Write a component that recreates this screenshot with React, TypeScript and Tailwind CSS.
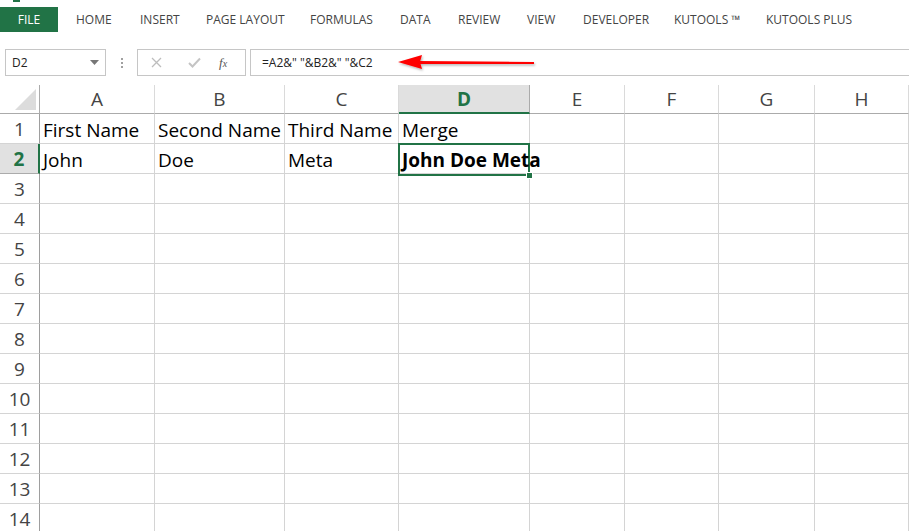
import React from "react";

const tabs = [
  { label: "HOME", w: "w-[64px]" },
  { label: "INSERT", w: "w-[66px]" },
  { label: "PAGE LAYOUT", w: "w-[104px]" },
  { label: "FORMULAS", w: "w-[90px]" },
  { label: "DATA", w: "w-[58px]" },
  { label: "REVIEW", w: "w-[69px]" },
  { label: "VIEW", w: "w-[56px]" },
  { label: "DEVELOPER", w: "w-[91px]" },
  { label: "KUTOOLS ™", w: "w-[92px]" },
  { label: "KUTOOLS PLUS", w: "w-[120px]" },
];

const columns = ["A", "B", "C", "D", "E", "F", "G", "H"];

const data: Record<number, string[]> = {
  1: ["First Name", "Second Name", "Third Name", "Merge"],
  2: ["John", "Doe", "Meta", ""],
};

const rows = Array.from({ length: 14 }, (_, i) => i + 1);

const font = { fontFamily: "'Open Sans', 'Liberation Sans', sans-serif" };

export default function App() {
  return (
    <div className="relative h-[531px] w-[909px] overflow-hidden bg-white text-[#222]" style={font}>
      {/* ribbon tabs */}
      <div className="h-[7px]">
        <div className="ml-[13px] h-[2px] w-[7px] bg-[#217346]" />
      </div>
      <div className="flex h-[25px] items-center text-[12px] text-[#444]">
        <div className="flex h-full w-[58px] items-center justify-center bg-[#217346] text-white">FILE</div>
        <div className="w-[18px]" />
        {tabs.map((t) => (
          <div key={t.label} className={`${t.w} whitespace-nowrap`}>
            {t.label}
          </div>
        ))}
      </div>

      {/* formula bar */}
      <div className="mt-[17px] flex h-[27px] items-stretch">
        <div className="ml-[5px] flex w-[101px] items-center justify-between border border-[#c6c6c6] pl-[6px] pr-[6px] text-[12px] text-[#222]">
          <span>D2</span>
          <svg width="9" height="5" viewBox="0 0 9 5">
            <path d="M0 0 L9 0 L4.5 5 Z" fill="#777" />
          </svg>
        </div>
        <div className="flex w-[31px] flex-col items-center justify-center gap-[2px]">
          <span className="h-[2px] w-[2px] bg-[#a0a0a0]" />
          <span className="h-[2px] w-[2px] bg-[#a0a0a0]" />
          <span className="h-[2px] w-[2px] bg-[#a0a0a0]" />
        </div>
        <div className="flex w-[109px] items-center border border-[#c6c6c6]">
          <svg className="ml-[13px]" width="11" height="11" viewBox="0 0 11 11">
            <path d="M1 1 L10 10 M10 1 L1 10" stroke="#bdbdbd" strokeWidth="1.3" />
          </svg>
          <svg className="ml-[26px]" width="13" height="11" viewBox="0 0 13 11">
            <path d="M1 6 L4.5 9.5 L12 1.5" stroke="#c4c4c4" strokeWidth="2" fill="none" />
          </svg>
          <span
            className="ml-[18px] text-[13px] italic text-[#555]"
            style={{ fontFamily: "'Liberation Serif', serif" }}
          >
            f<span className="text-[10px]">x</span>
          </span>
        </div>
        <div className="ml-[4px] flex flex-1 items-center border-y border-l border-[#c6c6c6] pl-[11px] text-[12px] text-[#222]">
          =A2&amp;" "&amp;B2&amp;" "&amp;C2
        </div>
      </div>

      {/* annotation arrow */}
      <svg className="absolute left-[396px] top-[53px]" width="144" height="20" viewBox="0 0 144 20">
        <defs>
          <filter id="sh" x="-10%" y="-50%" width="120%" height="200%">
            <feDropShadow dx="1" dy="1.5" stdDeviation="1.2" floodColor="#000" floodOpacity="0.3" />
          </filter>
        </defs>
        <g filter="url(#sh)">
          <path d="M2 9 L26 2 L24 9 L26 16 Z" fill="#ff0000" />
          <path d="M22 8 L138 9 L138 11 L22 11 Z" fill="#ff0000" />
        </g>
      </svg>

      {/* grid */}
      <div className="mt-[9px] grid grid-cols-[40px_115px_130px_114px_131px_95px_94px_96px_94px]">
        {/* header row */}
        <div className="relative h-[29px] border-b border-r border-[#ababab] bg-white">
          <svg className="absolute bottom-[3px] right-[3px]" width="21" height="21" viewBox="0 0 21 21">
            <path d="M21 0 L21 21 L0 21 Z" fill="#dcdcdc" />
          </svg>
        </div>
        {columns.map((c) =>
          c === "D" ? (
            <div
              key={c}
              className="flex h-[29px] items-center justify-center border-b-2 border-r border-b-[#217346] border-r-[#ababab] bg-[#e1e1e1] pt-[2px] text-[19px] font-bold text-[#217346]"
            >
              {c}
            </div>
          ) : (
            <div
              key={c}
              className="flex h-[29px] items-center justify-center border-b border-r border-b-[#ababab] border-r-[#dadada] bg-white text-[19px] text-[#444]"
            >
              {c}
            </div>
          )
        )}

        {rows.map((r) => (
          <React.Fragment key={r}>
            {r === 2 ? (
              <div className="flex h-[30px] items-center justify-center border-b border-r-2 border-b-[#ababab] border-r-[#217346] bg-[#e1e1e1] pt-[2px] text-[19px] font-bold text-[#217346]">
                {r}
              </div>
            ) : (
              <div className="flex h-[30px] items-center justify-center border-b border-r border-b-[#d4d4d4] border-r-[#9e9e9e] pt-[2px] text-[19px] text-[#444]">
                {r}
              </div>
            )}
            {columns.map((c, ci) => (
              <div
                key={c}
                className="flex h-[30px] items-center overflow-visible whitespace-nowrap border-b border-r border-[#d4d4d4] pl-[3px] pt-[3px] text-[19px] text-black"
              >
                {data[r]?.[ci] ?? ""}
              </div>
            ))}
          </React.Fragment>
        ))}
      </div>

      {/* active cell D2 */}
      <div className="absolute left-[398px] top-[143px] h-[33px] w-[132px] border-2 border-[#217346]">
        <div className="flex h-full items-center whitespace-nowrap pl-[2px] pt-[2px] text-[19px] font-bold text-black">
          John Doe Meta
        </div>
        <div className="absolute -bottom-[5px] -right-[5px] h-[7px] w-[7px] border border-white bg-[#217346]" />
      </div>
    </div>
  );
}
